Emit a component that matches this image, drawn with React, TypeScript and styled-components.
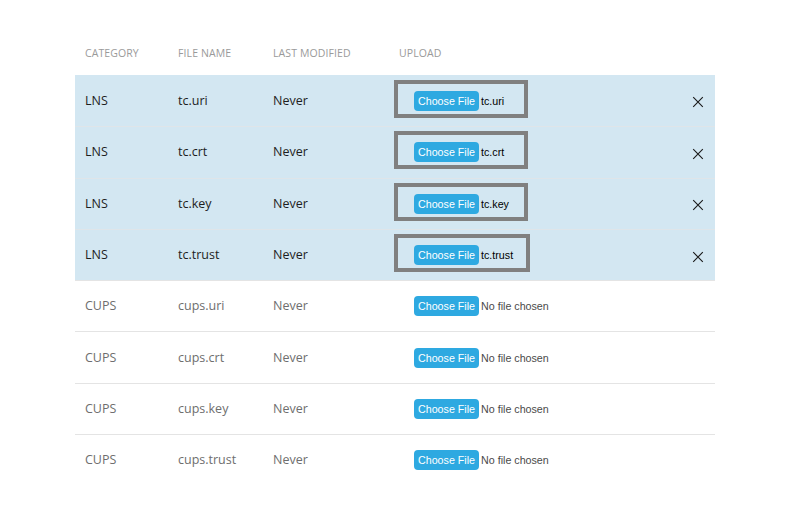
import React from "react";
import styled, { createGlobalStyle } from "styled-components";

const Global = createGlobalStyle`
  html, body { margin: 0; padding: 0; background: #ffffff; }
  body { font-family: "Open Sans", "Noto Sans", sans-serif; }
`;

const Page = styled.div`
  padding: 31px 79px 0 75px;
  width: 640px;
`;

const Grid = `
  display: grid;
  grid-template-columns: 93px 95px 126px 1fr 40px;
  align-items: center;
`;

const HeadRow = styled.div`
  ${Grid};
  height: 44px;
`;

const HeadCell = styled.div`
  padding-left: 10px;
  font-size: 10.5px;
  letter-spacing: 0.1px;
  text-transform: uppercase;
  color: #9a9a9a;
`;

const Row = styled.div<{ $active?: boolean }>`
  ${Grid};
  height: 50.3px;
  border-top: 1px solid ${(p) => (p.$active ? "#dfe5e9" : "#e4e4e4")};
  background: ${(p) => (p.$active ? "#d3e7f2" : "#ffffff")};
  &:first-of-type { border-top: none; height: 51.3px; }
`;

const Cell = styled.div<{ $active?: boolean }>`
  padding-left: 10px;
  font-size: 12.5px;
  color: ${(p) => (p.$active ? "#1e1e1e" : "#6e6e6e")};
  white-space: nowrap;
  margin-top: -1px;
`;

const UploadCell = styled.div`
  padding-left: 5px;
  display: flex;
  align-items: center;
`;

const FileBox = styled.div<{ $framed?: boolean }>`
  box-sizing: border-box;
  display: inline-flex;
  align-items: center;
  gap: 2px;
  min-width: 134px;
  border: 4px solid ${(p) => (p.$framed ? "#808080" : "transparent")};
  padding: ${(p) => (p.$framed ? "7px 13px 3px 16px" : "5px 13px 5px 16px")};
  margin-top: ${(p) => (p.$framed ? "-4px" : "0")};
`;

const ChooseButton = styled.span`
  display: inline-flex;
  align-items: center;
  height: 20px;
  padding: 0 4px;
  border-radius: 4px;
  background: #2ea9e1;
  color: #ffffff;
  font-family: "Liberation Sans", Arial, sans-serif;
  font-size: 10.7px;
`;

const FileName = styled.span<{ $chosen?: boolean }>`
  font-family: "Liberation Sans", Arial, sans-serif;
  font-size: 10.7px;
  color: ${(p) => (p.$chosen ? "#000000" : "#4a4a4a")};
`;

const CloseCell = styled.div`
  display: flex;
  justify-content: flex-end;
  padding-right: 11px;
  padding-top: 3px;
`;

const CloseIcon = () => (
  <svg width="12" height="12" viewBox="0 0 12 12" aria-hidden="true">
    <path d="M1.2 1.2 L10.8 10.8 M10.8 1.2 L1.2 10.8" stroke="#1a1a1a" strokeWidth="1.1" />
  </svg>
);

type Item = { cat: string; name: string; chosen?: string };

const items: Item[] = [
  { cat: "LNS", name: "tc.uri", chosen: "tc.uri" },
  { cat: "LNS", name: "tc.crt", chosen: "tc.crt" },
  { cat: "LNS", name: "tc.key", chosen: "tc.key" },
  { cat: "LNS", name: "tc.trust", chosen: "tc.trust" },
  { cat: "CUPS", name: "cups.uri" },
  { cat: "CUPS", name: "cups.crt" },
  { cat: "CUPS", name: "cups.key" },
  { cat: "CUPS", name: "cups.trust" },
];

export default function App() {
  return (
    <>
      <Global />
      <Page>
        <HeadRow>
          <HeadCell>Category</HeadCell>
          <HeadCell>File Name</HeadCell>
          <HeadCell>Last Modified</HeadCell>
          <HeadCell>Upload</HeadCell>
          <div />
        </HeadRow>
        <div>
          {items.map((it) => {
            const active = !!it.chosen;
            return (
              <Row key={it.name} $active={active}>
                <Cell $active={active}>{it.cat}</Cell>
                <Cell $active={active}>{it.name}</Cell>
                <Cell $active={active}>Never</Cell>
                <UploadCell>
                  <FileBox $framed={active}>
                    <ChooseButton>Choose File</ChooseButton>
                    <FileName $chosen={active}>{it.chosen ?? "No file chosen"}</FileName>
                  </FileBox>
                </UploadCell>
                <CloseCell>{active ? <CloseIcon /> : null}</CloseCell>
              </Row>
            );
          })}
        </div>
      </Page>
    </>
  );
}
